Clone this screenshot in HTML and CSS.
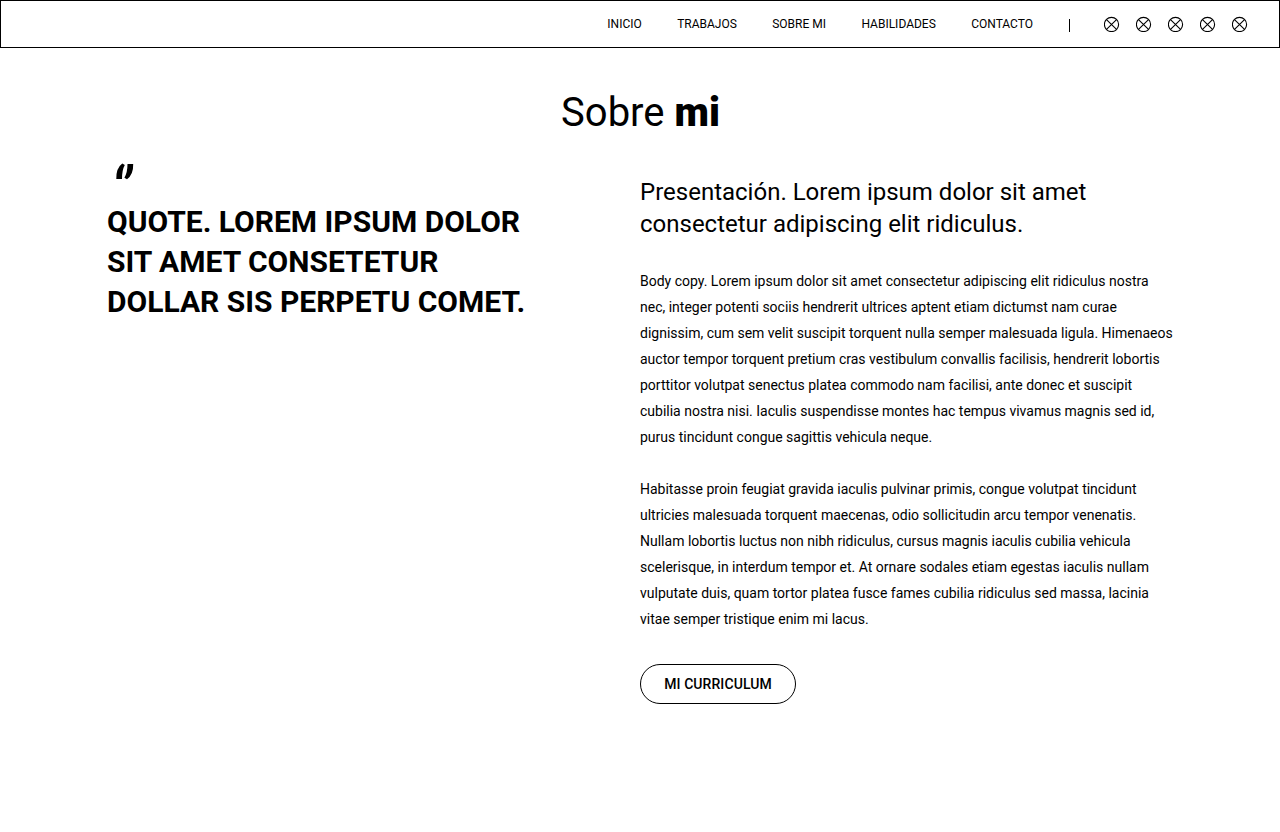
FILE: index.html
```html
<!DOCTYPE html>
<html lang="es">
<head>
<meta charset="utf-8">
<title>Sobre mi</title>
<link rel="stylesheet" href="styles.css">
</head>
<body>
<svg class="defs" width="0" height="0"><symbol id="social" viewBox="0 0 16 16"><circle cx="7.5" cy="8.5" r="7.1"/><path d="M2.5 3.7 12.5 13.3M12.5 3.7 2.5 13.3"/></symbol></svg>
<header class="bar">
  <nav class="nav">
    <a>INICIO</a><a>TRABAJOS</a><a>SOBRE MI</a><a>HABILIDADES</a><a>CONTACTO</a>
  </nav>
  <span class="divider"></span>
  <div class="social">
    <svg><use href="#social"/></svg><svg><use href="#social"/></svg><svg><use href="#social"/></svg><svg><use href="#social"/></svg><svg><use href="#social"/></svg>
  </div>
</header>
<main>
  <h1>Sobre <b>mi</b></h1>
  <div class="columns">
    <section class="quote">
      <svg class="mark" width="20" height="18" viewBox="0 0 20 18"><path d="M7.3.5 9.8 2Q7 7 7 16H1.3Q1 5 7.3.5Z"/><path d="M12.5 1H18.2Q18.5 11.5 12 16.3L9.4 14.7Q12.5 9.5 12.5 1Z"/></svg>
      <blockquote>QUOTE. LOREM IPSUM DOLOR<br>SIT AMET CONSETETUR<br>DOLLAR SIS PERPETU COMET.</blockquote>
    </section>
    <section class="about">
      <h2>Presentación. Lorem ipsum dolor sit amet<br>consectetur adipiscing elit ridiculus.</h2>
      <p>Body copy. Lorem ipsum dolor sit amet consectetur adipiscing elit ridiculus nostra<br>nec, integer potenti sociis hendrerit ultrices aptent etiam dictumst nam curae<br>dignissim, cum sem velit suscipit torquent nulla semper malesuada ligula. Himenaeos<br>auctor tempor torquent pretium cras vestibulum convallis facilisis, hendrerit lobortis<br>porttitor volutpat senectus platea commodo nam facilisi, ante donec et suscipit<br>cubilia nostra nisi. Iaculis suspendisse montes hac tempus vivamus magnis sed id,<br>purus tincidunt congue sagittis vehicula neque.</p>
      <p>Habitasse proin feugiat gravida iaculis pulvinar primis, congue volutpat tincidunt<br>ultricies malesuada torquent maecenas, odio sollicitudin arcu tempor venenatis.<br>Nullam lobortis luctus non nibh ridiculus, cursus magnis iaculis cubilia vehicula<br>scelerisque, in interdum tempor et. At ornare sodales etiam egestas iaculis nullam<br>vulputate duis, quam tortor platea fusce fames cubilia ridiculus sed massa, lacinia<br>vitae semper tristique enim mi lacus.</p>
      <a class="button">MI CURRICULUM</a>
    </section>
  </div>
</main>
</body>
</html>
```
FILE: styles.css
```css
* { box-sizing: border-box; margin: 0; padding: 0; }
body { font-family: Roboto, sans-serif; color: #000; background: #fff; }
.defs { display: block; }
.bar { display: flex; align-items: center; justify-content: flex-end; height: 48px; padding-right: 31px; border: 1px solid #000; }
.nav { display: flex; gap: 35.4px; font-size: 12px; line-height: 16px; }
.divider { width: 1px; height: 13px; margin: 3px 34px 0 36px; background: #000; }
.social { display: flex; gap: 16px; }
.social svg { width: 16px; height: 16px; fill: none; stroke: #000; stroke-width: 1.1; }
h1 { margin-top: 41px; padding-left: 1px; text-align: center; font-size: 40px; line-height: 48px; font-weight: 400; }
h1 b { font-weight: 900; }
.columns { display: grid; grid-template-columns: 533px 1fr; padding-left: 107px; }
.quote { padding-top: 26px; }
.mark { display: block; margin: 0 0 21px 8px; }
blockquote { font-size: 30px; line-height: 40px; font-weight: 700; white-space: nowrap; }
.about { padding-top: 39px; white-space: nowrap; }
h2 { margin-bottom: 28px; font-size: 24px; line-height: 32px; font-weight: 400; }
.about p { margin-bottom: 26px; font-size: 14px; line-height: 26px; }
.about .button { display: flex; align-items: center; justify-content: center; width: 156px; height: 40px; margin-top: 32px; border: 1px solid #000; border-radius: 20px; font-size: 14px; font-weight: 500; letter-spacing: .08px; }
```
